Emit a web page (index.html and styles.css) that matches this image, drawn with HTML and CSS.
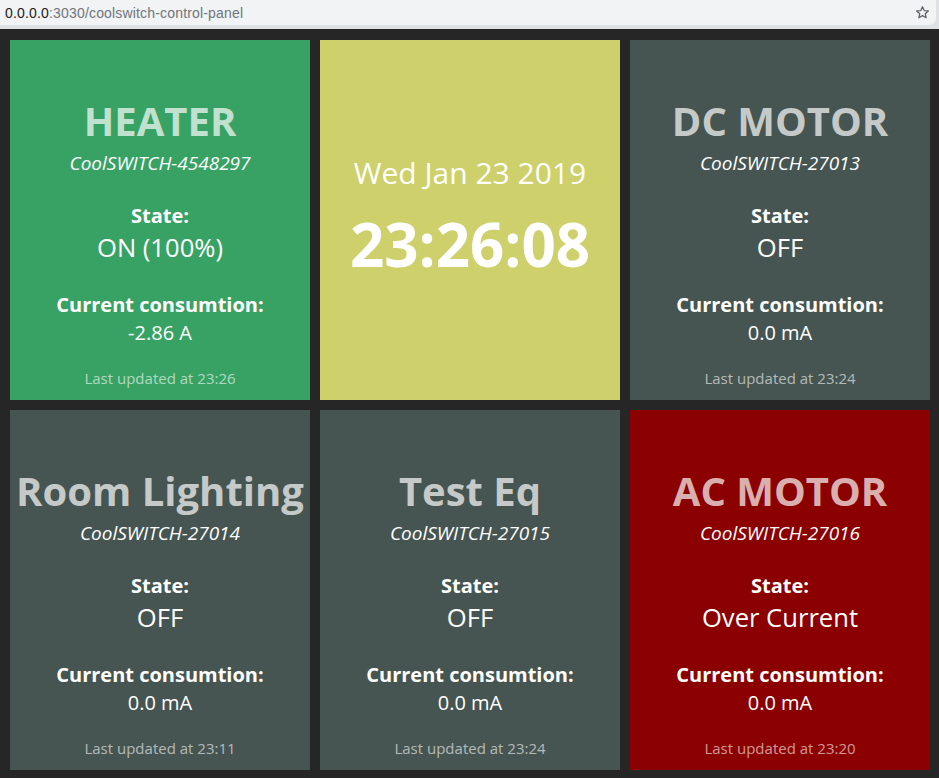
FILE: index.html
```html
<!DOCTYPE html>
<html lang="en">
<head>
<meta charset="utf-8">
<title>CoolSWITCH control panel</title>
<link rel="stylesheet" href="styles.css">
</head>
<body>
<div class="toolbar">
  <div class="omnibox">
    <span class="url"><span class="host">0.0.0.0</span>:3030/coolswitch-control-panel</span>
    <svg class="star" width="15" height="15" viewBox="0 0 24 24"><path d="M12 2.8l2.75 6.1 6.65.6-5.05 4.4 1.5 6.5L12 17l-5.85 3.4 1.5-6.5L2.6 9.5l6.65-.6z" fill="none" stroke="#5f6368" stroke-width="2" stroke-linejoin="round"/></svg>
  </div>
</div>
<main class="grid">
  <section class="card green">
    <h1 class="title">HEATER</h1>
    <p class="sub">CoolSWITCH-4548297</p>
    <p class="label">State:</p>
    <p class="value">ON (100%)</p>
    <p class="label label2">Current consumtion:</p>
    <p class="reading">-2.86 A</p>
    <p class="updated">Last updated at 23:26</p>
  </section>
  <section class="card yellow clock">
    <p class="date">Wed Jan 23 2019</p>
    <p class="time">23:26:08</p>
  </section>
  <section class="card gray">
    <h1 class="title">DC MOTOR</h1>
    <p class="sub">CoolSWITCH-27013</p>
    <p class="label">State:</p>
    <p class="value">OFF</p>
    <p class="label label2">Current consumtion:</p>
    <p class="reading">0.0 mA</p>
    <p class="updated">Last updated at 23:24</p>
  </section>
  <section class="card gray">
    <h1 class="title">Room Lighting</h1>
    <p class="sub">CoolSWITCH-27014</p>
    <p class="label">State:</p>
    <p class="value">OFF</p>
    <p class="label label2">Current consumtion:</p>
    <p class="reading">0.0 mA</p>
    <p class="updated">Last updated at 23:11</p>
  </section>
  <section class="card gray">
    <h1 class="title">Test Eq</h1>
    <p class="sub">CoolSWITCH-27015</p>
    <p class="label">State:</p>
    <p class="value">OFF</p>
    <p class="label label2">Current consumtion:</p>
    <p class="reading">0.0 mA</p>
    <p class="updated">Last updated at 23:24</p>
  </section>
  <section class="card red">
    <h1 class="title">AC MOTOR</h1>
    <p class="sub">CoolSWITCH-27016</p>
    <p class="label">State:</p>
    <p class="value">Over Current</p>
    <p class="label label2">Current consumtion:</p>
    <p class="reading">0.0 mA</p>
    <p class="updated">Last updated at 23:20</p>
  </section>
</main>
</body>
</html>
```
FILE: styles.css
```css
html, body {
  margin: 0;
  padding: 0;
  background: #262626;
  height: 100%;
  overflow: hidden;
}
body {
  font-family: "Open Sans", "Liberation Sans", sans-serif;
  color: #fff;
}
.toolbar {
  height: 29px;
  background: #dfe1e5;
  padding-right: 3px;
  box-sizing: border-box;
}
.omnibox {
  height: 25px;
  background: #f1f3f4;
  border-bottom-right-radius: 7px;
  display: flex;
  align-items: center;
  justify-content: space-between;
  padding: 0 6px 0 5px;
}
.url {
  font-family: "Liberation Sans", sans-serif;
  font-size: 14px;
  color: #70757a;
  letter-spacing: 0.17px;
}
.host {
  color: #202124;
}
.star {
  display: block;
}
.grid {
  display: grid;
  grid-template-columns: repeat(3, 300px);
  grid-auto-rows: 360px;
  gap: 10px;
  padding: 11px 10px;
}
.card {
  display: flex;
  flex-direction: column;
  align-items: center;
  text-align: center;
  padding-top: 56px;
  box-sizing: border-box;
}
.card p, .card h1 {
  margin: 0;
  white-space: nowrap;
}
.green { background: #38a265; }
.yellow { background: #cdd06b; }
.gray { background: #465551; }
.red { background: #8b0000; }
.title {
  font-size: 40px;
  font-weight: 700;
  line-height: 50px;
  color: rgba(255, 255, 255, 0.7);
}
.sub {
  font-size: 19px;
  font-style: italic;
  line-height: 24px;
  margin-top: 5px !important;
}
.label {
  font-size: 20px;
  font-weight: 700;
  line-height: 26px;
  margin-top: 28px !important;
}
.value {
  font-size: 25.6px;
  line-height: 32px;
  margin-top: 3px !important;
}
.label2 {
  margin-top: 28px !important;
}
.reading {
  font-size: 20px;
  line-height: 28px;
  margin-top: 1px !important;
}
.updated {
  font-size: 15px;
  line-height: 20px;
  margin-top: auto !important;
  margin-bottom: 12px !important;
  color: rgba(255, 255, 255, 0.6);
}
.clock {
  padding-top: 113px;
}
.date {
  font-size: 30px;
  line-height: 40px;
}
.time {
  font-size: 60px;
  font-weight: 700;
  line-height: 70px;
  margin-top: 16px !important;
}
```
